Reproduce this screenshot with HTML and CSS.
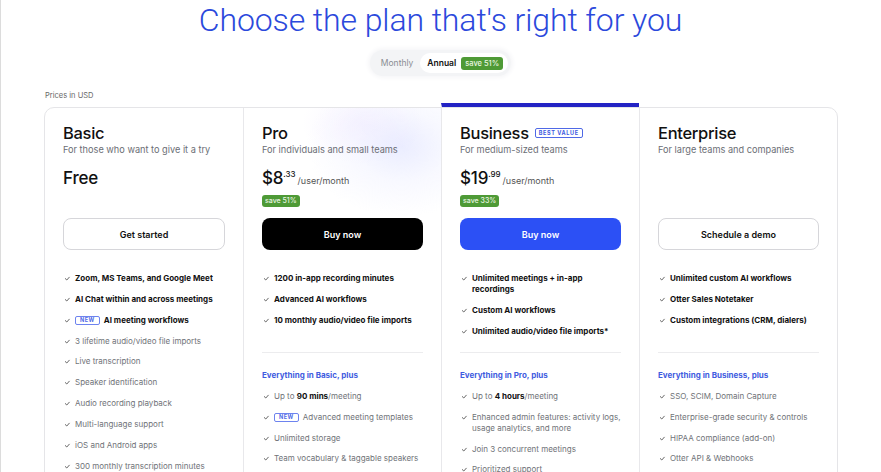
FILE: index.html
```html
<!DOCTYPE html>
<html lang="en">
<head>
<meta charset="utf-8">
<title>Pricing</title>
<link rel="stylesheet" href="styles.css">
</head>
<body>
<main class="page">
  <h1 class="title">Choose the plan that's right for you</h1>
  <div class="toggle-wrap">
    <div class="toggle">
      <span class="opt">Monthly</span>
      <span class="opt active">Annual <span class="save">save 51%</span></span>
    </div>
  </div>
  <p class="currency">Prices in USD</p>

  <section class="plans">
    <article class="plan">
      <header class="plan-head">
        <h2 class="plan-name">Basic</h2>
        <p class="plan-desc">For those who want to give it a try</p>
        <div class="price-block"><div class="price"><span class="amount">Free</span></div></div>
      </header>
      <a class="btn btn-outline">Get started</a>
      <ul class="features">
        <li class="strong"><svg class="check" viewBox="0 0 12 11"><path d="M2.3 5.6 L3.8 7 L6.3 4.2"/></svg><span>Zoom, MS Teams, and Google Meet</span></li>
        <li class="strong"><svg class="check" viewBox="0 0 12 11"><path d="M2.3 5.6 L3.8 7 L6.3 4.2"/></svg><span>AI Chat within and across meetings</span></li>
        <li class="strong"><svg class="check" viewBox="0 0 12 11"><path d="M2.3 5.6 L3.8 7 L6.3 4.2"/></svg><span><span class="new">NEW</span>AI meeting workflows</span></li>
        <li><svg class="check" viewBox="0 0 12 11"><path d="M2.3 5.6 L3.8 7 L6.3 4.2"/></svg><span>3 lifetime audio/video file imports</span></li>
        <li><svg class="check" viewBox="0 0 12 11"><path d="M2.3 5.6 L3.8 7 L6.3 4.2"/></svg><span>Live transcription</span></li>
        <li><svg class="check" viewBox="0 0 12 11"><path d="M2.3 5.6 L3.8 7 L6.3 4.2"/></svg><span>Speaker identification</span></li>
        <li><svg class="check" viewBox="0 0 12 11"><path d="M2.3 5.6 L3.8 7 L6.3 4.2"/></svg><span>Audio recording playback</span></li>
        <li><svg class="check" viewBox="0 0 12 11"><path d="M2.3 5.6 L3.8 7 L6.3 4.2"/></svg><span>Multi-language support</span></li>
        <li><svg class="check" viewBox="0 0 12 11"><path d="M2.3 5.6 L3.8 7 L6.3 4.2"/></svg><span>iOS and Android apps</span></li>
        <li><svg class="check" viewBox="0 0 12 11"><path d="M2.3 5.6 L3.8 7 L6.3 4.2"/></svg><span>300 monthly transcription minutes</span></li>
      </ul>
    </article>

    <article class="plan pro">
      <header class="plan-head">
        <h2 class="plan-name">Pro</h2>
        <p class="plan-desc">For individuals and small teams</p>
        <div class="price-block">
          <div class="price"><span class="amount">$8<sup class="cents">.33</sup></span><span class="per">/user/month</span></div>
          <span class="badge-save">save 51%</span>
        </div>
      </header>
      <a class="btn btn-dark">Buy now</a>
      <ul class="features top">
        <li class="strong"><svg class="check" viewBox="0 0 12 11"><path d="M2.3 5.6 L3.8 7 L6.3 4.2"/></svg><span>1200 in-app recording minutes</span></li>
        <li class="strong"><svg class="check" viewBox="0 0 12 11"><path d="M2.3 5.6 L3.8 7 L6.3 4.2"/></svg><span>Advanced AI workflows</span></li>
        <li class="strong"><svg class="check" viewBox="0 0 12 11"><path d="M2.3 5.6 L3.8 7 L6.3 4.2"/></svg><span>10 monthly audio/video file imports</span></li>
      </ul>
      <hr class="divider">
      <ul class="features more">
        <li class="heading">Everything in Basic, plus</li>
        <li><svg class="check" viewBox="0 0 12 11"><path d="M2.3 5.6 L3.8 7 L6.3 4.2"/></svg><span>Up to <b>90 mins</b>/meeting</span></li>
        <li><svg class="check" viewBox="0 0 12 11"><path d="M2.3 5.6 L3.8 7 L6.3 4.2"/></svg><span><span class="new">NEW</span>Advanced meeting templates</span></li>
        <li><svg class="check" viewBox="0 0 12 11"><path d="M2.3 5.6 L3.8 7 L6.3 4.2"/></svg><span>Unlimited storage</span></li>
        <li><svg class="check" viewBox="0 0 12 11"><path d="M2.3 5.6 L3.8 7 L6.3 4.2"/></svg><span>Team vocabulary &amp; taggable speakers</span></li>
      </ul>
    </article>

    <article class="plan business">
      <header class="plan-head">
        <h2 class="plan-name">Business <span class="best">BEST VALUE</span></h2>
        <p class="plan-desc">For medium-sized teams</p>
        <div class="price-block">
          <div class="price"><span class="amount">$19<sup class="cents">.99</sup></span><span class="per">/user/month</span></div>
          <span class="badge-save">save 33%</span>
        </div>
      </header>
      <a class="btn btn-blue">Buy now</a>
      <ul class="features top">
        <li class="strong"><svg class="check" viewBox="0 0 12 11"><path d="M2.3 5.6 L3.8 7 L6.3 4.2"/></svg><span>Unlimited meetings + in-app recordings</span></li>
        <li class="strong"><svg class="check" viewBox="0 0 12 11"><path d="M2.3 5.6 L3.8 7 L6.3 4.2"/></svg><span>Custom AI workflows</span></li>
        <li class="strong"><svg class="check" viewBox="0 0 12 11"><path d="M2.3 5.6 L3.8 7 L6.3 4.2"/></svg><span>Unlimited audio/video file imports*</span></li>
      </ul>
      <hr class="divider">
      <ul class="features more">
        <li class="heading">Everything in Pro, plus</li>
        <li><svg class="check" viewBox="0 0 12 11"><path d="M2.3 5.6 L3.8 7 L6.3 4.2"/></svg><span>Up to <b>4 hours</b>/meeting</span></li>
        <li><svg class="check" viewBox="0 0 12 11"><path d="M2.3 5.6 L3.8 7 L6.3 4.2"/></svg><span>Enhanced admin features: activity logs, usage analytics, and more</span></li>
        <li><svg class="check" viewBox="0 0 12 11"><path d="M2.3 5.6 L3.8 7 L6.3 4.2"/></svg><span>Join 3 concurrent meetings</span></li>
        <li><svg class="check" viewBox="0 0 12 11"><path d="M2.3 5.6 L3.8 7 L6.3 4.2"/></svg><span>Prioritized support</span></li>
      </ul>
    </article>

    <article class="plan">
      <header class="plan-head">
        <h2 class="plan-name">Enterprise</h2>
        <p class="plan-desc">For large teams and companies</p>
        <div class="price-block"></div>
      </header>
      <a class="btn btn-outline">Schedule a demo</a>
      <ul class="features top">
        <li class="strong"><svg class="check" viewBox="0 0 12 11"><path d="M2.3 5.6 L3.8 7 L6.3 4.2"/></svg><span>Unlimited custom AI workflows</span></li>
        <li class="strong"><svg class="check" viewBox="0 0 12 11"><path d="M2.3 5.6 L3.8 7 L6.3 4.2"/></svg><span>Otter Sales Notetaker</span></li>
        <li class="strong"><svg class="check" viewBox="0 0 12 11"><path d="M2.3 5.6 L3.8 7 L6.3 4.2"/></svg><span>Custom integrations (CRM, dialers)</span></li>
      </ul>
      <hr class="divider">
      <ul class="features more">
        <li class="heading">Everything in Business, plus</li>
        <li><svg class="check" viewBox="0 0 12 11"><path d="M2.3 5.6 L3.8 7 L6.3 4.2"/></svg><span>SSO, SCIM, Domain Capture</span></li>
        <li><svg class="check" viewBox="0 0 12 11"><path d="M2.3 5.6 L3.8 7 L6.3 4.2"/></svg><span>Enterprise-grade security &amp; controls</span></li>
        <li><svg class="check" viewBox="0 0 12 11"><path d="M2.3 5.6 L3.8 7 L6.3 4.2"/></svg><span>HIPAA compliance (add-on)</span></li>
        <li><svg class="check" viewBox="0 0 12 11"><path d="M2.3 5.6 L3.8 7 L6.3 4.2"/></svg><span>Otter API &amp; Webhooks</span></li>
      </ul>
    </article>
  </section>
</main>
</body>
</html>
```

FILE: styles.css
```css
* { box-sizing: border-box; }

html, body { height: 100%; }

body {
  margin: 0;
  background: #fff;
  color: #111;
  font-family: Inter, "Liberation Sans", sans-serif;
  box-shadow: inset 1px 0 0 #dcdcdc;
  overflow: hidden;
}

.title {
  margin: 0;
  font-family: Roboto, "Liberation Sans", sans-serif;
  font-weight: 300;
  font-size: 32px;
  line-height: 40px;
  color: #2b49dc;
  text-align: center;
  letter-spacing: -0.1px;
}

.toggle-wrap {
  display: flex;
  justify-content: center;
  margin-top: 10px;
}

.toggle {
  display: flex;
  align-items: center;
  height: 26px;
  padding: 3px;
  background: #f3f4f6;
  border-radius: 13px;
  box-shadow: 0 0 4px 2px #f6f6f8;
}

.opt {
  display: flex;
  align-items: center;
  height: 20px;
  padding: 0 7px 0 8px;
  border-radius: 10px;
  font-size: 8.5px;
  color: #8a8d93;
}

.opt.active {
  gap: 5px;
  padding: 0 5px 0 7px;
  background: #fff;
  color: #111;
  font-weight: 600;
}

.save {
  height: 13px;
  line-height: 13px;
  padding: 0 4px;
  border-radius: 3px;
  background: #4e9a36;
  color: #eaf6e2;
  font-size: 7.5px;
  font-weight: 500;
}

.currency {
  margin: 14px 0 0 45px;
  font-size: 7.5px;
  line-height: 12px;
  color: #666;
}

.plans {
  margin: 5px 43px 0 44px;
  display: grid;
  grid-template-columns: repeat(4, 1fr);
  border: 1px solid #e5e5e8;
  border-radius: 10px;
}

.plan {
  display: flex;
  flex-direction: column;
  padding: 15px 18px 20px;
}

.plan + .plan { border-left: 1px solid #e8e8eb; }

.plan.pro {
  background:
    radial-gradient(ellipse 95px 70px at 80% 10%, rgba(218, 222, 255, 0.55), rgba(232, 234, 255, 0.3) 50%, rgba(255, 255, 255, 0) 100%),
    radial-gradient(ellipse 60px 40px at 60% 4%, rgba(240, 232, 255, 0.5), rgba(255, 255, 255, 0) 100%);
}

.plan.business {
  margin-top: -5px;
  padding-top: 16px;
  border-top: 4px solid #2323c4;
}

.plan-name {
  display: flex;
  align-items: center;
  gap: 6px;
  margin: 0;
  font-size: 16.5px;
  line-height: 20px;
  font-weight: 500;
  letter-spacing: -0.3px;
}

.best {
  height: 10px;
  line-height: 8px;
  padding: 0 3px;
  border: 1px solid #4f69e6;
  border-radius: 2px;
  color: #3d5ae0;
  font-size: 5.5px;
  font-weight: 700;
  letter-spacing: 0.6px;
}

.plan-desc {
  margin: 1px 0 0;
  font-size: 9.2px;
  line-height: 12px;
  color: #6b6e75;
}

.price-block {
  display: flex;
  flex-direction: column;
  align-items: flex-start;
  height: 36px;
  margin-top: 12px;
}

.price {
  display: flex;
  align-items: baseline;
  gap: 2px;
  line-height: 20px;
}

.amount {
  font-size: 17px;
  font-weight: 500;
  letter-spacing: -0.2px;
}

.cents {
  font-size: 8px;
  line-height: 0;
  vertical-align: 7px;
  letter-spacing: 0;
}

.per {
  font-size: 9px;
  color: #555;
}

.badge-save {
  margin-top: 4px;
  height: 12px;
  line-height: 12px;
  padding: 0 3px;
  border-radius: 3px;
  background: #4e9a36;
  color: #eaf6e2;
  font-size: 7px;
  font-weight: 500;
}

.btn {
  display: flex;
  align-items: center;
  justify-content: center;
  height: 32px;
  margin-top: 14px;
  border-radius: 8px;
  font-size: 9px;
  font-weight: 600;
  cursor: pointer;
}

.btn-outline { border: 1px solid #d6d6da; color: #111; background: #fff; }
.btn-dark { background: #000; color: #fff; }
.btn-blue { background: #2c50f5; color: #fff; }

.features {
  display: flex;
  flex-direction: column;
  gap: 9.85px;
  margin: 23px 0 0;
  padding: 0;
  list-style: none;
}

.features.top { min-height: 78.5px; }

.features.more { margin-top: 17.5px; }

.features li {
  display: flex;
  font-size: 8px;
  line-height: 11px;
  color: #707378;
}

.features li.strong {
  color: #111;
  font-weight: 700;
}

.features li b { color: #111; font-weight: 700; }

.features li.heading {
  color: #3f5ce0;
  font-weight: 700;
}

.check {
  flex: none;
  width: 12px;
  height: 11px;
  fill: none;
  stroke: #555;
  stroke-width: 0.9;
  stroke-linecap: round;
  stroke-linejoin: round;
}

.new {
  display: inline-block;
  height: 9px;
  line-height: 7px;
  margin-right: 4px;
  padding: 0 4px;
  border: 1px solid #6d83ef;
  border-radius: 2px;
  color: #4f6ae6;
  font-size: 5.5px;
  font-weight: 700;
  letter-spacing: 0.5px;
  vertical-align: 0.5px;
}

.divider {
  margin: 0;
  border: 0;
  border-top: 1px solid #ececee;
}
```
